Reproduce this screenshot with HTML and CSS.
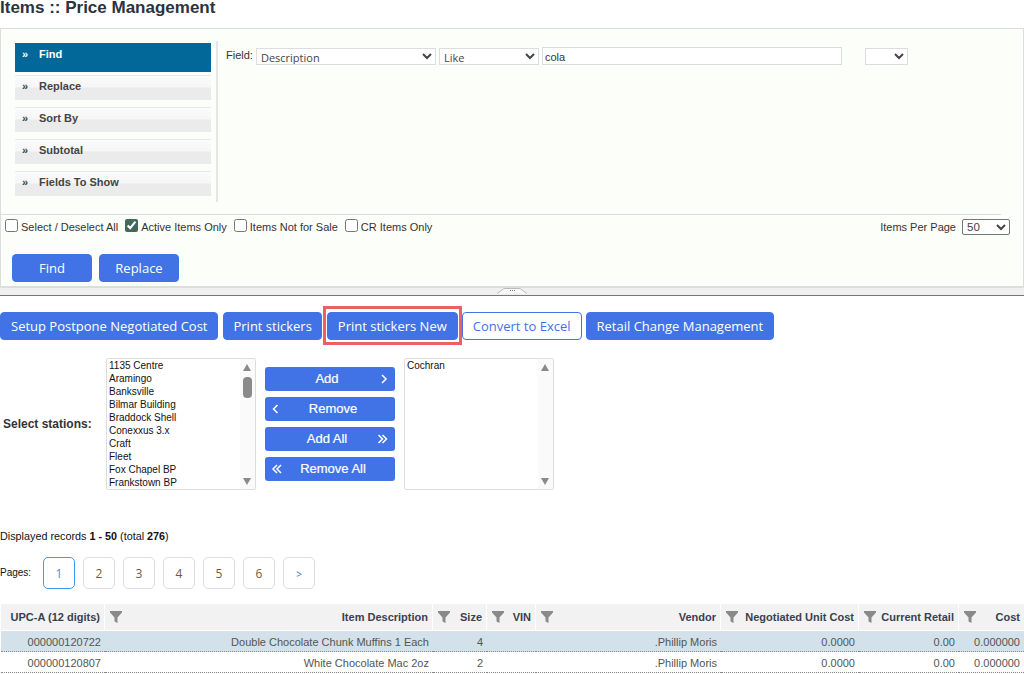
FILE: index.html
```html
<!DOCTYPE html>
<html lang="en">
<head>
    <meta charset="UTF-8">
    <title>Items :: Price Management</title>
    <link rel="stylesheet" href="styles.css">
</head>
<body>
    <svg class="defs" width="0" height="0">
        <symbol id="funnel" viewBox="0 0 12 12">
            <path d="M0 0H12V1.5L7.5 6.5V12L4.5 10.5V6.5L0 1.5Z"/>
        </symbol>
        <symbol id="chev-right" viewBox="0 0 12 10">
            <path d="M5 1L9 5L5 9"/>
        </symbol>
        <symbol id="chev-left" viewBox="0 0 12 10">
            <path d="M6.5 1L2.5 5L6.5 9"/>
        </symbol>
        <symbol id="chev-right2" viewBox="0 0 12 10">
            <path d="M1.5 1L5.5 5L1.5 9M5.5 1L9.5 5L5.5 9"/>
        </symbol>
        <symbol id="chev-left2" viewBox="0 0 12 10">
            <path d="M6 1L2 5L6 9M10 1L6 5L10 9"/>
        </symbol>
    </svg>

    <h1>Items :: Price Management</h1>

    <div class="search-panel">
        <div class="search-top">
            <ul class="tabs">
                <li class="tab active"><span class="tab-arrow">»</span>Find</li>
                <li class="tab"><span class="tab-arrow">»</span>Replace</li>
                <li class="tab"><span class="tab-arrow">»</span>Sort By</li>
                <li class="tab"><span class="tab-arrow">»</span>Subtotal</li>
                <li class="tab"><span class="tab-arrow">»</span>Fields To Show</li>
            </ul>
            <div class="tab-body">
                <label class="field-label">Field:</label>
                <select class="sel sel-field"><option>Description</option></select>
                <select class="sel sel-op"><option>Like</option></select>
                <input class="txt" type="text" value="cola">
                <select class="sel sel-extra"><option></option></select>
            </div>
        </div>
        <div class="options">
            <label class="check"><input type="checkbox">Select / Deselect All</label>
            <label class="check"><input type="checkbox" checked>Active Items Only</label>
            <label class="check"><input type="checkbox">Items Not for Sale</label>
            <label class="check"><input type="checkbox">CR Items Only</label>
            <div class="per-page">
                Items Per Page
                <select class="sel-page"><option>50</option></select>
            </div>
        </div>
        <div class="search-actions">
            <button class="btn btn-search">Find</button>
            <button class="btn btn-search">Replace</button>
        </div>
    </div>

    <div class="splitter">
        <svg class="grip" width="30" height="6" viewBox="0 0 30 6">
            <path class="grip-edge" d="M0 5.5L7 .5H23L30 5.5"/>
            <path class="grip-dots" d="M13 2h1v1h-1zM15 2h1v1h-1zM17 2h1v1h-1z"/>
        </svg>
    </div>

    <div class="toolbar">
        <button class="btn btn-first">Setup Postpone Negotiated Cost</button>
        <button class="btn btn-tight">Print stickers</button>
        <div class="marked"><button class="btn">Print stickers New</button></div>
        <button class="btn btn-outline">Convert to Excel</button>
        <button class="btn">Retail Change Management</button>
    </div>

    <div class="stations">
        <div class="stations-label">Select stations:</div>
        <div class="listbox">
            <ul class="listbox-items">
                <li>1135 Centre</li>
                <li>Aramingo</li>
                <li>Banksville</li>
                <li>Bilmar Building</li>
                <li>Braddock Shell</li>
                <li>Conexxus 3.x</li>
                <li>Craft</li>
                <li>Fleet</li>
                <li>Fox Chapel BP</li>
                <li>Frankstown BP</li>
            </ul>
            <div class="scroll">
                <span class="scroll-up"></span>
                <span class="scroll-thumb"></span>
                <span class="scroll-down"></span>
            </div>
        </div>
        <div class="move-buttons">
            <button class="move"><span class="move-label">Add</span><svg class="move-icon"><use href="#chev-right"/></svg></button>
            <button class="move"><svg class="move-icon"><use href="#chev-left"/></svg><span class="move-label">Remove</span></button>
            <button class="move"><span class="move-label">Add All</span><svg class="move-icon"><use href="#chev-right2"/></svg></button>
            <button class="move"><svg class="move-icon"><use href="#chev-left2"/></svg><span class="move-label">Remove All</span></button>
        </div>
        <div class="listbox">
            <ul class="listbox-items">
                <li>Cochran</li>
            </ul>
            <div class="scroll">
                <span class="scroll-up"></span>
                <span class="scroll-down"></span>
            </div>
        </div>
    </div>

    <div class="records">Displayed records <b>1 - 50</b> (total <b>276</b>)</div>

    <div class="pages">
        <span class="pages-label">Pages:</span>
        <a class="page current">1</a>
        <a class="page">2</a>
        <a class="page">3</a>
        <a class="page">4</a>
        <a class="page">5</a>
        <a class="page">6</a>
        <a class="page page-next">&gt;</a>
    </div>

    <table class="grid">
        <colgroup>
            <col class="c-upc"><col class="c-desc"><col class="c-size"><col class="c-vin">
            <col class="c-vendor"><col class="c-neg"><col class="c-retail"><col class="c-cost">
        </colgroup>
        <thead>
            <tr>
                <th>UPC-A (12 digits)</th>
                <th><svg class="filter"><use href="#funnel"/></svg>Item Description</th>
                <th><svg class="filter"><use href="#funnel"/></svg>Size</th>
                <th><svg class="filter"><use href="#funnel"/></svg>VIN</th>
                <th><svg class="filter"><use href="#funnel"/></svg>Vendor</th>
                <th><svg class="filter"><use href="#funnel"/></svg>Negotiated Unit Cost</th>
                <th><svg class="filter"><use href="#funnel"/></svg>Current Retail</th>
                <th><svg class="filter"><use href="#funnel"/></svg>Cost</th>
            </tr>
        </thead>
        <tbody>
            <tr class="selected">
                <td>000000120722</td>
                <td>Double Chocolate Chunk Muffins 1 Each</td>
                <td>4</td>
                <td></td>
                <td>.Phillip Moris</td>
                <td>0.0000</td>
                <td>0.00</td>
                <td>0.000000</td>
            </tr>
            <tr>
                <td>000000120807</td>
                <td>White Chocolate Mac 2oz</td>
                <td>2</td>
                <td></td>
                <td>.Phillip Moris</td>
                <td>0.0000</td>
                <td>0.00</td>
                <td>0.000000</td>
            </tr>
        </tbody>
    </table>
</body>
</html>
```

FILE: styles.css
```css
html, body {
    height: 674px;
    overflow: hidden;
}
body {
    font-family: "Liberation Sans", Arial, sans-serif;
    font-size: 11px;
    color: #333;
    background-color: #fff;
    margin: 0;
}
.defs {
    position: absolute;
}
h1 {
    font-size: 17px;
    line-height: 16px;
    height: 28px;
    margin: 0;
    color: #2b3340;
}

/* search panel */
.search-panel {
    height: 260px;
    box-sizing: border-box;
    background-color: #fcfef9;
    border: 1px solid #ddd;
    border-bottom-width: 2px;
}
.search-top {
    display: flex;
    height: 186px;
    box-sizing: border-box;
    padding-top: 12px;
    border-bottom: 1px solid #ddd;
    margin-right: 22px;
}
.tabs {
    list-style: none;
    margin: 2px 0 0 14px;
    padding: 0;
    width: 196px;
}
.tab {
    height: 25px;
    margin-bottom: 7px;
    box-sizing: border-box;
    padding-top: 4px;
    font-weight: bold;
    color: #444;
    border-top: 1px solid #e8e8e8;
    background: linear-gradient(#fbfbfb 0, #f6f6f6 11px, #ebebeb 12px, #ebebeb 100%);
}
.tab.active {
    height: 29px;
    margin-bottom: 3px;
    padding-top: 5px;
    color: #fff;
    border-top: 0;
    background: #026899;
}
.tab-arrow {
    display: inline-block;
    width: 24px;
    padding-left: 7px;
    box-sizing: border-box;
}
.tab-body {
    display: flex;
    align-items: flex-start;
    flex: 1;
    margin: 0 0 12px 5px;
    padding: 7px 0 0 8px;
    border-left: 2px solid #e6e6e6;
}
.field-label {
    margin: 1px 3px 0 0;
}
.sel {
    height: 17px;
    font-family: "Open Sans", sans-serif;
    font-size: 11px;
    color: #444;
    background-color: #fff;
    border: 1px solid #ddd;
    padding: 0;
}
.sel-field {
    width: 180px;
    margin-right: 3px;
}
.sel-op {
    width: 100px;
    margin-right: 3px;
}
.txt {
    width: 300px;
    height: 18px;
    box-sizing: border-box;
    margin-top: -1px;
    padding: 1px 2px 0;
    font-family: "Liberation Sans", Arial, sans-serif;
    font-size: 11px;
    color: #333;
    background-color: #fff;
    border: 1px solid #ddd;
    outline: none;
}
.sel-extra {
    width: 43px;
    margin-left: 23px;
}
.options {
    display: flex;
    align-items: center;
    height: 24px;
    padding-left: 3px;
    padding-right: 13px;
}
.check {
    display: flex;
    align-items: center;
    margin-right: 6px;
}
.check input {
    width: 13px;
    height: 13px;
    margin: 0 3px 4px 1px;
    accent-color: #43695f;
}
.per-page {
    display: flex;
    align-items: center;
    gap: 6px;
    margin-left: auto;
}
.sel-page {
    width: 48px;
    height: 16px;
    font-family: "Liberation Sans", Arial, sans-serif;
    font-size: 11.5px;
    color: #444;
    background-color: #fff;
    border: 1px solid #767676;
    border-radius: 2px;
    padding: 0;
}
.search-actions {
    display: flex;
    gap: 7px;
    padding: 15px 0 0 11px;
}

/* buttons */
.btn {
    height: 28px;
    padding: 0 10px;
    font-family: "Open Sans", sans-serif;
    font-size: 13px;
    color: #fff;
    background-color: #4173e6;
    border: 1px solid #4173e6;
    border-radius: 4px;
}
.btn-search {
    width: 80px;
    padding: 0;
}
.btn-outline {
    color: #4173e6;
    background-color: #fff;
}
.btn-first {
    margin-right: 1px;
}
.btn-tight {
    padding: 0 9px;
}
.marked {
    display: flex;
    margin: -6px -4px -5px -3px;
    padding: 3px 1px 2px 1px;
    border: 3px solid #ee5f63;
}

.splitter {
    height: 7px;
    background-color: #f0f0f0;
    border-bottom: 1px solid #77776a;
}
.grip {
    display: block;
    margin: 0 auto;
}
.grip-edge {
    fill: #f8f8f8;
    stroke: #bbb;
}
.grip-dots {
    fill: #777;
}
.toolbar {
    display: flex;
    align-items: flex-start;
    gap: 4px;
    padding-top: 16px;
}

/* stations */
.stations {
    display: flex;
    align-items: center;
    margin-top: 18px;
    height: 132px;
}
.stations-label {
    width: 106px;
    padding-left: 3px;
    box-sizing: border-box;
    font-size: 12px;
    font-weight: bold;
}
.listbox {
    display: flex;
    width: 150px;
    height: 132px;
    box-sizing: border-box;
    background-color: #fff;
    border: 1px solid #ddd;
    border-radius: 2px;
}
.listbox-items {
    flex: 1;
    list-style: none;
    margin: 0;
    padding: 0 2px;
    font-size: 10px;
    line-height: 13px;
    color: #111;
    overflow: hidden;
}
.scroll {
    position: relative;
    width: 15px;
    background-color: #fafafa;
}
.scroll-up, .scroll-down {
    position: absolute;
    left: 3px;
    border-left: 4.5px solid transparent;
    border-right: 4.5px solid transparent;
}
.scroll-up {
    top: 5px;
    border-bottom: 7px solid #8a8a8a;
}
.scroll-down {
    bottom: 4px;
    border-top: 7px solid #8a8a8a;
}
.scroll-thumb {
    position: absolute;
    top: 18px;
    left: 3px;
    width: 9px;
    height: 21px;
    background-color: #8a8a8a;
    border-radius: 4px;
}
.move-buttons {
    display: flex;
    flex-direction: column;
    gap: 6px;
    width: 130px;
    margin: 0 9px;
}
.move {
    display: flex;
    align-items: center;
    justify-content: space-between;
    height: 24px;
    padding: 0 9px;
    font-family: "Liberation Sans", Arial, sans-serif;
    font-size: 13px;
    -webkit-text-stroke: 0.2px #fff;
    color: #fff;
    background-color: #4173e6;
    border: 0;
    border-radius: 3px;
}
.move-label {
    flex: 1;
    text-align: center;
    margin-top: -1px;
}
.move-icon {
    width: 12px;
    height: 10px;
    margin: 0 -3px;
    fill: none;
    stroke: #fff;
    stroke-width: 1.5;
}

.records {
    margin-top: 40px;
    font-size: 10.8px;
    line-height: 12px;
    color: #111;
}
.pages {
    display: flex;
    align-items: center;
    gap: 8px;
    margin-top: 15px;
}
.pages-label {
    width: 35px;
    margin-top: -1px;
    font-size: 10px;
    color: #111;
}
.page {
    width: 32px;
    height: 32px;
    box-sizing: border-box;
    font-family: "Open Sans", sans-serif;
    font-size: 12px;
    line-height: 32px;
    text-align: center;
    color: #6b5b4e;
    border: 1px solid #ddd;
    border-radius: 5px;
}
.page.current {
    color: #3b8eea;
    border-color: #3b9bef;
}
.page-next {
    font-size: 10px;
    color: #3b6ea5;
}

/* grid */
.grid {
    width: 1023px;
    table-layout: fixed;
    border-collapse: separate;
    border-spacing: 0;
    margin: 15px 0 0 1px;
}
.c-upc { width: 104px; }
.c-desc { width: 328px; }
.c-size { width: 54px; }
.c-vin { width: 49px; }
.c-vendor { width: 185px; }
.c-neg { width: 138px; }
.c-retail { width: 100px; }
.c-cost { width: 65px; }
.grid th {
    position: relative;
    height: 27px;
    padding: 0 4px 1px 0;
    box-sizing: border-box;
    font-size: 11px;
    text-align: right;
    color: #3a4050;
    background-color: #f2f2f2;
    border-right: 1px solid #fff;
    border-bottom: 1px solid #fff;
}
.grid th:last-child {
    border-right: 0;
}
.filter {
    position: absolute;
    left: 5px;
    top: 7px;
    width: 12px;
    height: 12px;
    fill: #8a8a8a;
}
.grid td {
    height: 21px;
    padding: 1px 4px 0 0;
    box-sizing: border-box;
    text-align: right;
    color: #555;
    border-bottom: 1px dotted #888;
}
.grid .selected td {
    background-color: #d2e1ea;
}
```
